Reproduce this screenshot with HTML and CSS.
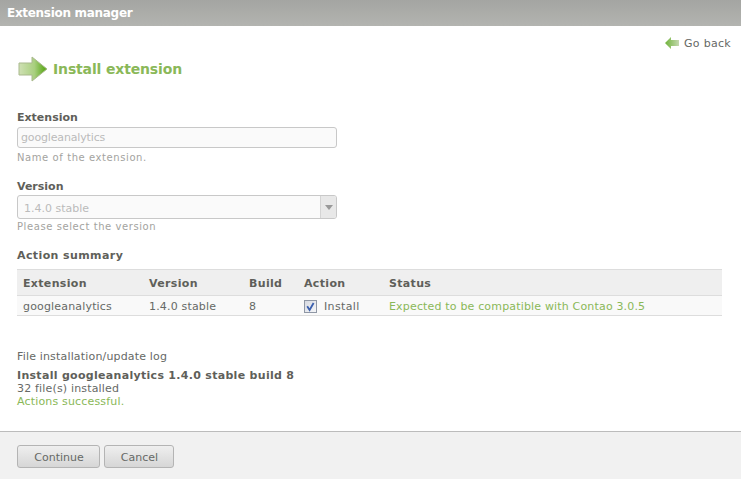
FILE: index.html
```html
<!DOCTYPE html>
<html lang="en">
<head>
<meta charset="utf-8">
<title>Extension manager</title>
<link rel="stylesheet" href="styles.css">
</head>
<body>
<header class="titlebar">Extension manager</header>
<main class="content">
  <div class="backrow">
    <a class="back" href="#">
      <svg class="back-icon" width="14" height="12" viewBox="0 0 14 12"><defs><linearGradient id="bk" x1="0" x2="1" y1="0" y2="0"><stop offset="0" stop-color="#6fb33a"/><stop offset="1" stop-color="#c5d8b0"/></linearGradient></defs><path d="M0 6 L6 0 V3 H14 V9 H6 V12 Z" fill="url(#bk)"/></svg>
      <span>Go back</span>
    </a>
  </div>
  <h1 class="headline">
    <svg class="head-icon" width="30" height="26" viewBox="0 0 30 26"><defs><linearGradient id="fw" x1="0" x2="1" y1="0" y2="0"><stop offset="0" stop-color="#cfe0b4"/><stop offset="0.55" stop-color="#a9cf7f"/><stop offset="0.9" stop-color="#62ac22"/></linearGradient></defs><path d="M1 7 H14 V1 L29 13 L14 25 V19 H1 Z" fill="url(#fw)" stroke="#a9b98d" stroke-width="1"/></svg>
    <span>Install extension</span>
  </h1>
  <section class="field first">
    <h3 class="label">Extension</h3>
    <div class="input">googleanalytics</div>
    <p class="hint">Name of the extension.</p>
  </section>
  <section class="field second">
    <h3 class="label">Version</h3>
    <div class="select"><span class="select-value">1.4.0 stable</span><span class="select-btn"><i class="caret"></i></span></div>
    <p class="hint">Please select the version</p>
  </section>
  <h3 class="label summary">Action summary</h3>
  <table class="actions">
    <thead>
      <tr><th class="c1">Extension</th><th class="c2">Version</th><th class="c3">Build</th><th class="c4">Action</th><th>Status</th></tr>
    </thead>
    <tbody>
      <tr>
        <td>googleanalytics</td><td>1.4.0 stable</td><td>8</td>
        <td><span class="action"><svg class="check" width="13" height="13" viewBox="0 0 13 13"><defs><linearGradient id="cb" x1="0" x2="1" y1="0" y2="1"><stop offset="0" stop-color="#d5d8e0"/><stop offset="1" stop-color="#f6f7f9"/></linearGradient></defs><rect x="0.5" y="0.5" width="12" height="12" fill="url(#cb)" stroke="#8f97a5"/><path d="M3.2 6.2 L5.6 10 L9.6 3" fill="none" stroke="#3a5fae" stroke-width="1.8"/></svg><span class="action-text">Install</span></span></td>
        <td class="ok">Expected to be compatible with Contao 3.0.5</td>
      </tr>
    </tbody>
  </table>
  <div class="log">
    <p class="log-title">File installation/update log</p>
    <p class="log-line strong">Install googleanalytics 1.4.0 stable build 8</p>
    <p class="log-line">32 file(s) installed</p>
    <p class="log-line ok">Actions successful.</p>
  </div>
</main>
<footer class="footer">
  <button class="btn continue" type="button">Continue</button>
  <button class="btn cancel" type="button">Cancel</button>
</footer>
</body>
</html>
```
FILE: styles.css
```css
* { box-sizing: border-box; }
html, body { margin: 0; padding: 0; }
body {
  width: 741px;
  height: 479px;
  overflow: hidden;
  background: #fff;
  font-family: "DejaVu Sans", Verdana, sans-serif;
  font-size: 11px;
  line-height: 13px;
  color: #666966;
  letter-spacing: 0.17px;
  display: flex;
  flex-direction: column;
}
.titlebar {
  height: 26px;
  background: linear-gradient(#a4a5a2, #b3b4b0);
  color: #fff;
  font-size: 12px;
  font-weight: bold;
  line-height: 26px;
  letter-spacing: -0.3px;
  padding-left: 7px;
  flex: none;
}
.content { flex: 1; padding: 0 19px 0 17px; }
.backrow { display: flex; justify-content: flex-end; padding: 11px 0 0; height: 30px; margin-right: -9px; }
.back { display: flex; align-items: center; height: 12px; color: #666966; text-decoration: none; gap: 5px; letter-spacing: 0.3px; }
.headline { display: flex; align-items: center; gap: 5px; margin: 0 0 0 1px; height: 26px; color: #8ab858; font-size: 14px; font-weight: bold; letter-spacing: -0.15px; }
.label { margin: 0; font-size: 11px; font-weight: bold; line-height: 13px; color: #5f5f5a; letter-spacing: 0; }
.field.first { margin-top: 29px; }
.field.second { margin-top: 16px; }
.input, .select {
  width: 320px;
  border: 1px solid #c8c8c8;
  border-radius: 3px;
  background: #fafafa;
  color: #bbb;
  margin-top: 3px;
  letter-spacing: -0.15px;
}
.second .select { margin-top: 2px; }
.input { height: 21px; line-height: 19px; padding-left: 3px; }
.select { height: 24px; line-height: 24px; display: flex; justify-content: space-between; letter-spacing: 0; }
.select-value { padding: 1px 0 0 6px; }
.select-btn { width: 16px; background: #e8e8e8; border-left: 1px solid #d4d4d4; display: flex; align-items: center; justify-content: center; border-radius: 0 2px 2px 0; }
.caret { width: 0; height: 0; border: 4px solid transparent; border-top: 5px solid #999; border-bottom: 0; }
.hint { margin: 4px 0 0; font-size: 10px; letter-spacing: 0.58px; line-height: 12px; color: #a3a3a0; }
.select + .hint { margin-top: 2px; }
.summary { margin-top: 16px; letter-spacing: 0.4px; }
.actions { width: 705px; margin-top: 7px; border-collapse: collapse; table-layout: fixed; }
.actions th, .actions td { padding: 0 0 0 6px; text-align: left; }
.actions th { height: 26px; padding-top: 1px; background: #efefef; border-top: 1px solid #ddd; border-bottom: 1px solid #ddd; font-weight: bold; color: #5f5f5a; letter-spacing: 0.33px; }
.actions td { height: 20px; padding-top: 1px; background: #f9f9f9; border-bottom: 1px solid #ddd; }
.c1 { width: 126px; }
.c2 { width: 100px; }
.c3 { width: 55px; }
.c4 { width: 85px; }
.action { display: flex; align-items: center; gap: 7px; }
.action-text { letter-spacing: 0.35px; }
.check { flex: none; }
.ok { color: #8ab858; }
.log { margin-top: 34px; }
.log p { margin: 0; }
.log-title { margin-bottom: 6px !important; }
.strong { font-weight: bold; color: #5f5f5a; letter-spacing: 0.3px; }
.footer {
  flex: none;
  height: 48px;
  background: #f1f1f1;
  border-top: 1px solid #bcbcbc;
  padding: 13px 17px 0;
  display: flex;
  align-items: flex-start;
  gap: 4px;
}
.btn {
  height: 23px;
  padding: 1px 0 0 1px;
  border: 1px solid #b4b4b4;
  border-radius: 3px;
  background: linear-gradient(#efefef, #d6d6d6);
  font: 11px "DejaVu Sans", Verdana, sans-serif;
  color: #666966;
}
.continue { width: 83px; }
.cancel { width: 70px; }
```
